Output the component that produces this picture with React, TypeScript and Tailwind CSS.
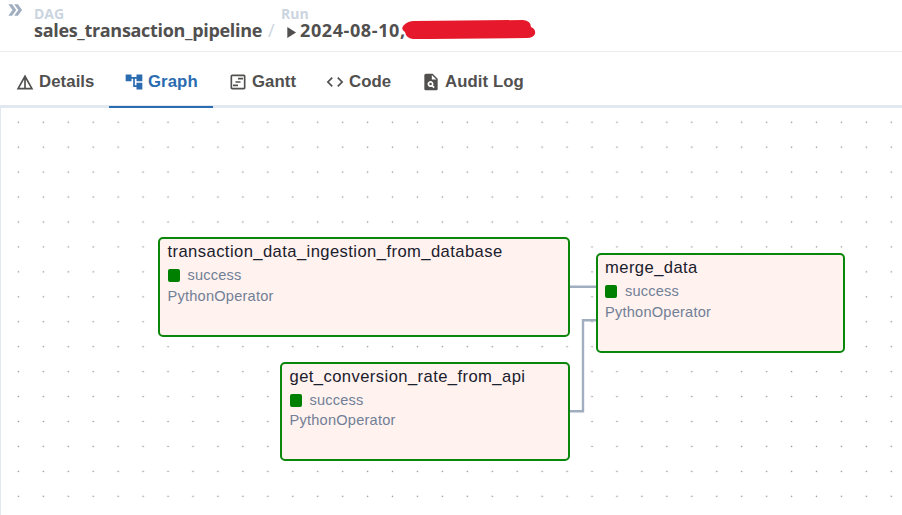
import type { IconType } from "react-icons";
import {
  MdAccountTree,
  MdCode,
  MdDetails,
  MdDoubleArrow,
  MdOutlineViewTimeline,
  MdPlagiarism,
  MdPlayArrow,
} from "react-icons/md";

function Tab({ icon: Icon, label, className, active = false }: { icon: IconType; label: string; className: string; active?: boolean }) {
  return (
    <button
      className={`relative flex h-full shrink-0 items-center whitespace-nowrap pt-[6px] text-[16.75px] font-bold leading-none tracking-[0.08px] ${
        active ? "text-[#2b6cb0]" : "text-[#51504f]"
      } ${className}`}
    >
      <Icon className="mr-[4px] size-[20px] shrink-0" />
      <span className="pt-[2px]">{label}</span>
      {active && <span className="absolute inset-x-0 -bottom-[3px] h-[2px] bg-[#2b6cb0]" />}
    </button>
  );
}

function TaskNode({ name, className, stateClass }: { name: string; className: string; stateClass: string }) {
  return (
    <div className={`absolute rounded-[5px] border-2 border-[#0a860a] bg-[#fff2ef] pl-[7.5px] ${className}`}>
      <div className="mt-[2px] h-[22px] whitespace-nowrap text-[16.6px] leading-[22px] tracking-[0.42px] text-[#1a202c]">{name}</div>
      <div className={`flex items-center text-[14.6px] tracking-[0.18px] text-[#718096] ${stateClass}`}>
        <span className="mr-[8px] h-[13px] w-[12px] rounded-[2px] bg-[#008000]" />
        <span className="pt-px">success</span>
      </div>
      <div className="h-[21px] text-[14.6px] leading-[21px] tracking-[0.22px] text-[#718096]">PythonOperator</div>
    </div>
  );
}

export default function App() {
  return (
    <div className="flex h-[515px] w-[902px] flex-col overflow-hidden bg-white font-['Liberation_Sans',Arial,sans-serif]">
      <header className="flex h-[52px] shrink-0 border-b border-[#ececec] font-['Open_Sans','Noto_Sans',sans-serif] text-[#51504f]">
        <MdDoubleArrow className="ml-[5px] mt-0 size-[20px] shrink-0 text-[#a0aec0]" />
        <div className="ml-[9px] w-[228px] shrink-0 pt-[6px]">
          <div className="text-[14px] font-bold leading-[16px] text-[#cbd5e0]">DAG</div>
          <div className="whitespace-nowrap text-[18px] font-bold leading-[17px] tracking-[-0.31px]">sales_transaction_pipeline</div>
        </div>
        <span className="ml-[6px] w-[6px] pt-[19px] text-[18px] leading-[22px] text-[#cbd5e0]">/</span>
        <div className="ml-[7px] shrink-0 pt-[6px]">
          <div className="text-[14px] font-bold leading-[16px] text-[#cbd5e0]">Run</div>
          <div className="flex h-[17px] items-center">
            <MdPlayArrow className="mt-[3px] size-[19px]" />
            <span className="whitespace-nowrap text-[18px] font-bold leading-[17px] tracking-[0.6px]">2024-08-10,</span>
          </div>
        </div>
        <svg className="-ml-[5px] mt-[18px] h-[23px] w-[136px] shrink-0" viewBox="0 0 136 23">
          <path d="M3 7Q7 3 13 3L122 2Q130 3 130 9Q135 11 134 16Q132 20 126 20L28 21L12 21Q5 20 4 14Q-1 11 3 7Z" fill="#e5192b" />
        </svg>
      </header>
      <nav className="flex h-[56px] shrink-0 border-b-3 border-[#e2e8f0]">
        <Tab icon={MdDetails} label="Details" className="w-[109px] pl-[15px]" />
        <Tab icon={MdAccountTree} label="Graph" className="w-[104px] pl-[15px]" active />
        <Tab icon={MdOutlineViewTimeline} label="Gantt" className="w-[97px] pl-[15px]" />
        <Tab icon={MdCode} label="Code" className="w-[97px] pl-[15px]" />
        <Tab icon={MdPlagiarism} label="Audit Log" className="pl-[14px]" />
      </nav>
      <main className="relative flex-1 border-l border-[#e2e8f0]">
        <svg className="absolute inset-0 size-full">
          <defs>
            <pattern id="dots" x="4.95" y="1.75" width="24.94" height="24.94" patternUnits="userSpaceOnUse">
              <circle cx="12.47" cy="12.47" r="0.8" fill="#919191" />
            </pattern>
          </defs>
          <rect width="100%" height="100%" fill="url(#dots)" />
          <path d="M568 178.8H596M568 303.2H582V212.2H596" fill="none" stroke="#a0aec0" strokeWidth="2.4" />
        </svg>
        <TaskNode name="transaction_data_ingestion_from_database" className="left-[157px] top-[129px] h-[99.5px] w-[412px]" stateClass="mt-[2px] h-[21px]" />
        <TaskNode name="get_conversion_rate_from_api" className="left-[279px] top-[254px] h-[99px] w-[290px]" stateClass="mt-[2px] h-[20px]" />
        <TaskNode name="merge_data" className="left-[594.5px] top-[145.4px] h-[99.6px] w-[249.5px]" stateClass="mt-[1.6px] h-[21px]" />
      </main>
    </div>
  );
}
